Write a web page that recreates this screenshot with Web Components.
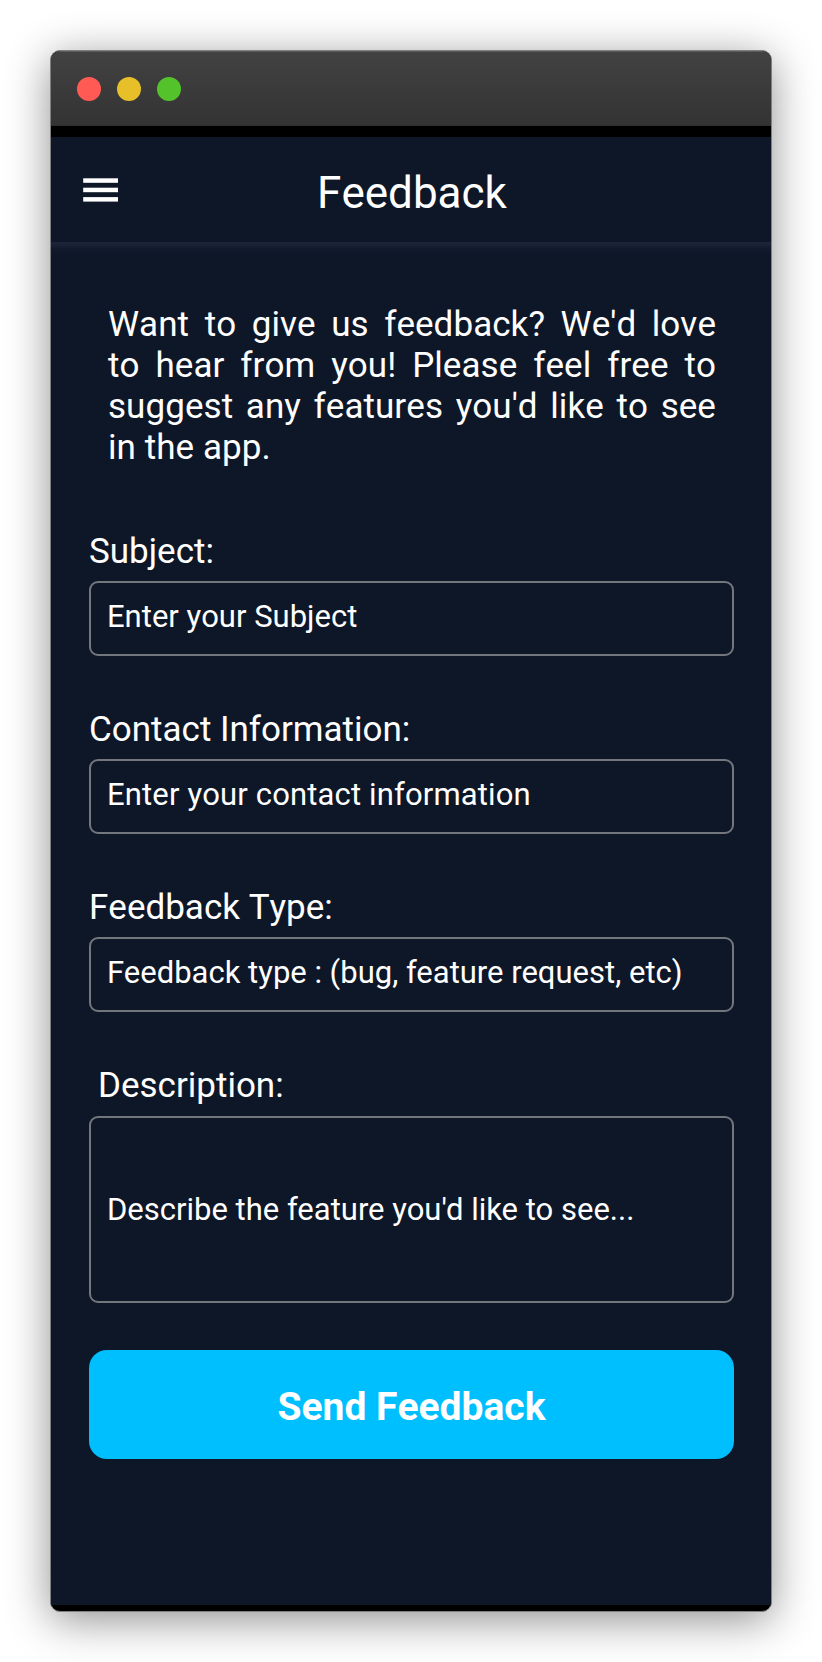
<!DOCTYPE html>
<html lang="en">
<head>
<meta charset="utf-8">
<title>Feedback</title>
<style>
html, body { margin: 0; background: #fff; }
body { width: 822px; height: 1662px; overflow: hidden; font-family: Roboto, "Liberation Sans", sans-serif; font-kerning: none; color: #fff; }
</style>
</head>
<body>
<desktop-window>
  <app-header>Feedback</app-header>
  <feedback-form>
    <p slot="intro">Want to give us feedback? We'd love to&nbsp;hear from you! Please feel free to suggest any features you'd like to see in the app.</p>
    <form-field label="Subject:">Enter your Subject</form-field>
    <form-field label="Contact Information:" style="--tracking:.15px">Enter your contact information</form-field>
    <form-field label="Feedback Type:" style="--kerning:normal">Feedback type : (bug, feature request, etc)</form-field>
    <form-field label="Description:" style="--kerning:normal" multiline>Describe the feature you'd like to see...</form-field>
    <send-button slot="action">Send Feedback</send-button>
  </feedback-form>
</desktop-window>
<script>
function define(name, html, setup) {
  const template = document.createElement('template');
  template.innerHTML = html;
  customElements.define(name, class extends HTMLElement {
    constructor() {
      super();
      this.attachShadow({ mode: 'open' }).append(template.content.cloneNode(true));
    }
    connectedCallback() { if (setup) setup(this); }
  });
}

define('desktop-window', `
<style>
:host { display: block; padding: 50px; box-sizing: border-box; width: 822px; height: 1662px; }
.frame { box-sizing: border-box; height: 1562px; border: 1px solid #808080; border-radius: 10px; overflow: hidden;
  display: flex; flex-direction: column; background: #000; box-shadow: 0 8px 44px rgba(0,0,0,.44); }
.bar { height: 75px; box-sizing: border-box; flex: none; display: flex; align-items: center; gap: 16px; padding: 1px 26px 0;
  background: linear-gradient(#424242, #333); border-top: 1px solid #5c5c5c; border-bottom: 1px solid #2d2d2d; }
.dot { width: 24px; height: 24px; border-radius: 50%; }
.screen { flex: 1; margin: 11px 0 6px; background: #0e1728; display: flex; flex-direction: column; }
</style>
<div class="frame">
  <div class="bar">
    <span class="dot" style="background:#ff5b54"></span>
    <span class="dot" style="background:#e6bf29"></span>
    <span class="dot" style="background:#54c22b"></span>
  </div>
  <div class="screen"><slot></slot></div>
</div>`);

define('app-header', `
<style>
:host { display: grid; grid-template-columns: 100px 1fr 100px; align-items: center; height: 105px; flex: none; }
svg { display: block; margin-left: 32px; margin-top: 1px; }
.title { font-size: 44px; line-height: 52px; text-align: center; padding: 6px 0 0 2px; }
</style>
<svg width="36" height="24" viewBox="0 0 36 24" fill="#fff">
  <rect x=".2" y=".3" width="34.8" height="4.5"/><rect x=".2" y="9.7" width="34.8" height="4.5"/><rect x=".2" y="19.1" width="34.8" height="4.5"/>
</svg>
<div class="title"><slot></slot></div>`);

define('feedback-form', `
<style>
:host { display: block; flex: 1; padding: 62px 37px 0 38px; background: linear-gradient(#1c2536, #1a2335 3px, #121b2d 6px, #0e1728 12px); }
::slotted(p) { margin: 0 18px 62px 19px; font-size: 35px; line-height: 41px; letter-spacing: .06px; text-align: justify; }
.fields { display: flex; flex-direction: column; gap: 52px; }
.action { margin-top: 47px; }
</style>
<slot name="intro"></slot>
<div class="fields"><slot></slot></div>
<div class="action"><slot name="action"></slot></div>`);

define('form-field', `
<style>
:host { display: block; }
.label { font-size: 35px; line-height: 41px; padding-top: 1px; margin-bottom: 9px; }
.box { box-sizing: border-box; height: 75px; border: 2px solid #74767d; border-radius: 9px; padding: 0 15px 4px 16px;
  display: flex; align-items: center; font-size: 31px; line-height: 37px; white-space: nowrap;
  font-kerning: var(--kerning, none); letter-spacing: var(--tracking, normal); }
:host([multiline]) .label { margin-left: 9px; margin-bottom: 10px; }
:host([multiline]) .box { height: 187px; padding-bottom: 0; }
</style>
<div class="label"></div>
<div class="box"><span><slot></slot></span></div>`,
el => { el.shadowRoot.querySelector('.label').textContent = el.getAttribute('label'); });

define('send-button', `
<style>
:host { display: block; }
button { display: block; box-sizing: border-box; width: 100%; height: 109px; border: 0; border-radius: 18px; background: #00bfff;
  color: #fff; font: bold 39px/46px Roboto, "Liberation Sans", sans-serif; font-kerning: none; padding: 5px 0 0; }
</style>
<button><slot></slot></button>`);
</script>
</body>
</html>
